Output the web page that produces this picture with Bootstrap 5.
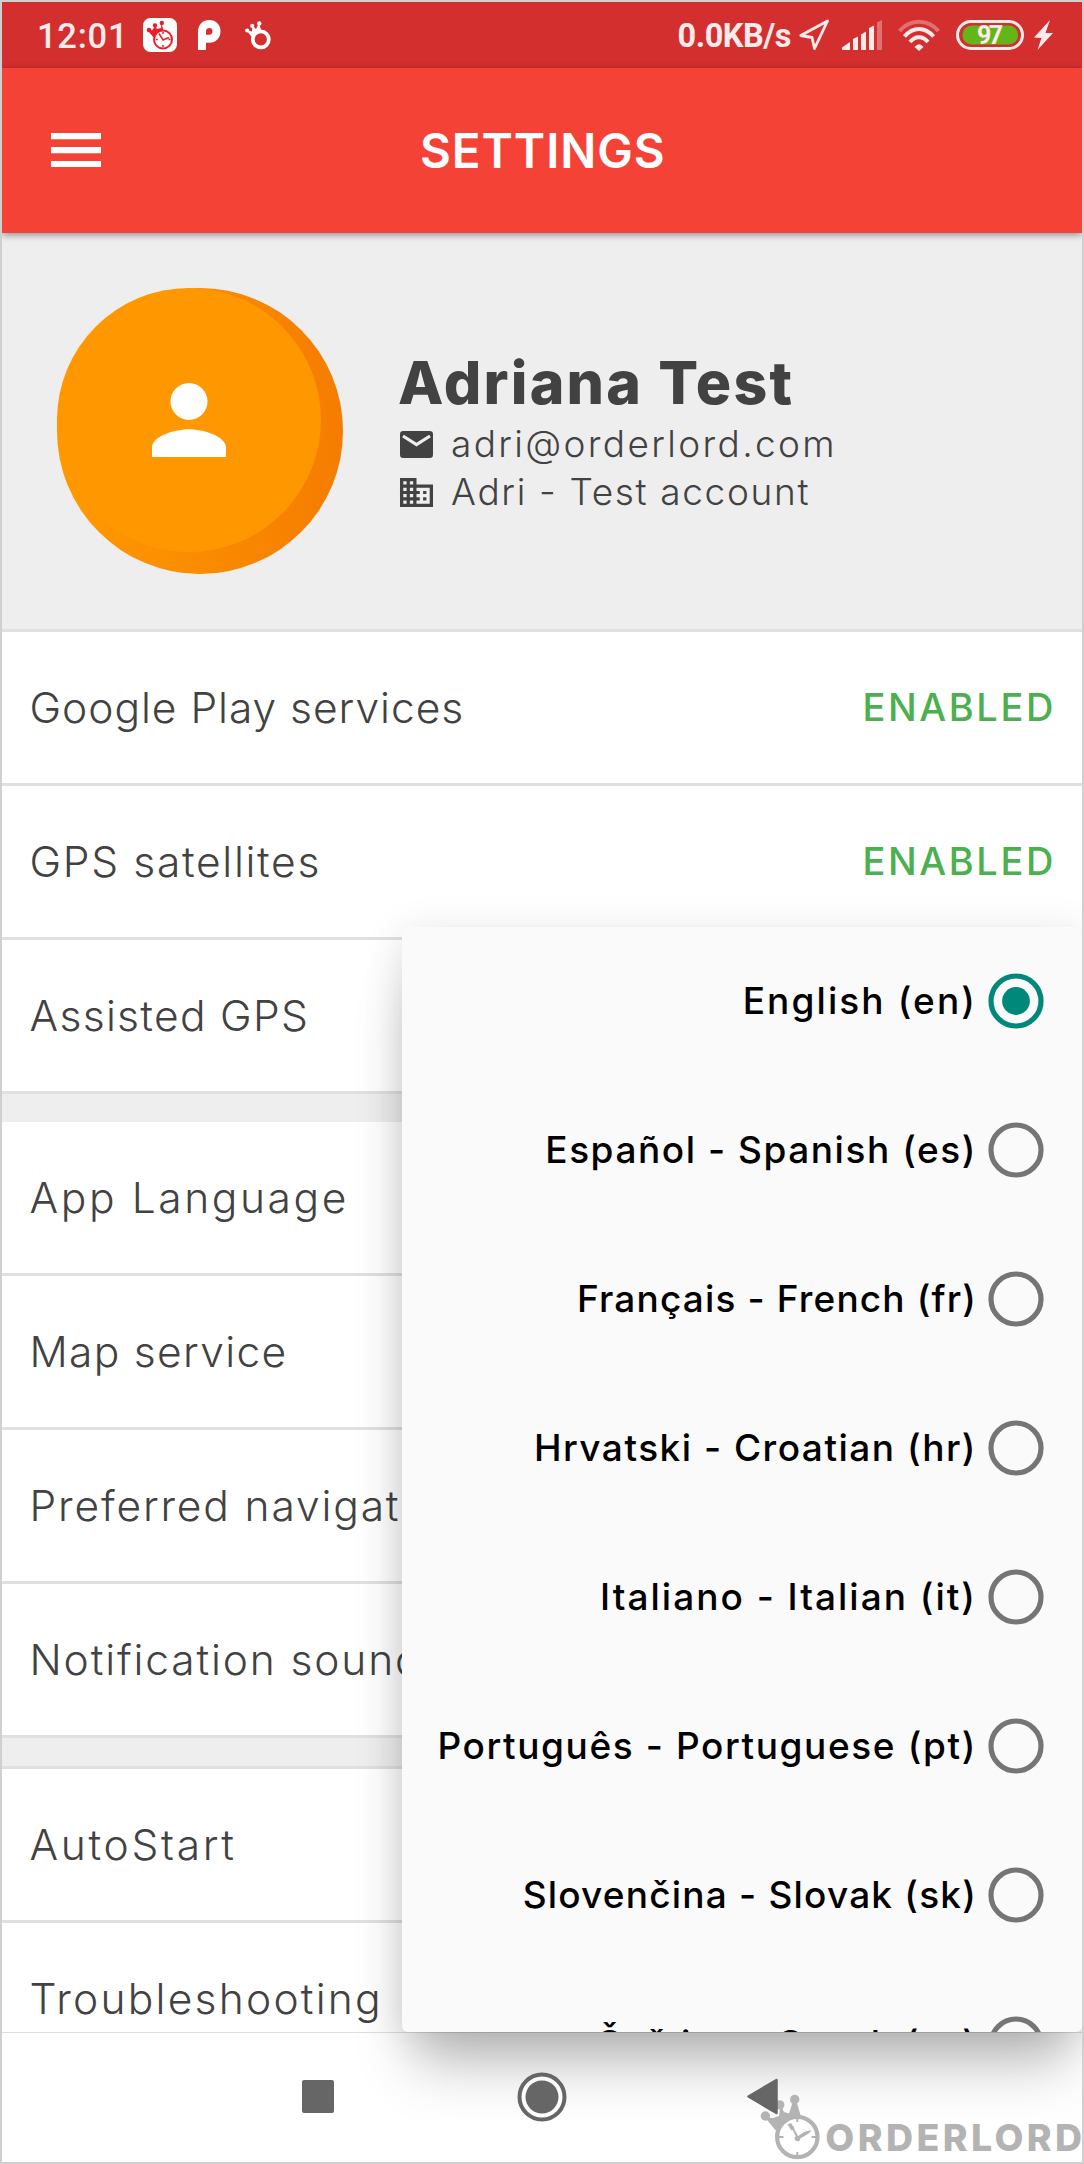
<!DOCTYPE html>
<html lang="en">
<head>
<meta charset="utf-8">
<meta name="viewport" content="width=device-width, initial-scale=1">
<title>Settings</title>
<link href="https://cdn.jsdelivr.net/npm/bootstrap@5.3.0/dist/css/bootstrap.min.css" rel="stylesheet">
<style>
  body { font-family: Inter, "Open Sans", sans-serif; background: #fff; }
  .phone { width: 1084px; height: 2164px; border: 2px solid #d0d0d0; background: #fff; white-space: nowrap; }
  .phone svg { display: block; flex: none; }

  .status { height: 66px; background: #d32f2f; color: #fdeaea; padding: 0 29px 0 35px; font: 500 34.5px/66px Roboto, sans-serif; }
  .status .clock { letter-spacing: .75px; width: 106px; padding-top: 1px; }
  .status .speed { font-weight: 700; font-size: 32.5px; letter-spacing: -.5px; margin-right: 8px; padding-top: 2px; }
  .level { font: 700 25px/1 Roboto, sans-serif; }
  .i-p { margin-left: 21px } .i-ring { margin-left: 24px } .i-signal { margin-left: 12px }
  .i-wifi { margin-left: 15px } .i-battery { margin-left: 16px } .i-bolt { margin-left: 10px }

  .appbar { height: 165px; background: #f44336; color: #fff; padding: 0 0 0 49px; z-index: 1; box-shadow: 0 2px 7px rgba(0,0,0,.4); }
  .appbar h1 { font-size: 47.5px; font-weight: 600; letter-spacing: .95px; line-height: 1; margin: 0 0 0 319px; }

  .profile { height: 399px; background: #eee; border-bottom: 3px solid #e0e0e0; color: #424242; padding: 55px 0 0 55px; }
  .who { margin: 65px 0 0 56px; }
  .who h2 { font-size: 59px; font-weight: 800; letter-spacing: 2.2px; line-height: 60px; margin: 0 0 7px -1px; }
  .who div { height: 48px; font-size: 37px; font-weight: 300; line-height: 48px; }
  .who .mail { letter-spacing: 2.34px; }
  .who .firm { letter-spacing: 1.65px; }
  .who svg { margin-right: 17px; }

  .prefs { height: 1400px; color: #424242; }
  .prefs .pref { height: 154px; border-bottom: 3px solid #e0e0e0; padding: 0 28px 0 27.5px; font-size: 42.5px; font-weight: 300; flex: none; }
  .on { color: #4caf50; font-size: 38px; font-weight: 500; letter-spacing: 2.6px; margin-right: -2px; }
  .gap-strip { height: 28px; background: #eee; flex: none; }
  .gap-strip.edge { height: 31px; border-bottom: 3px solid #e0e0e0; }
  .s10 { letter-spacing: .97px } .s13 { letter-spacing: 1.3px } .s14 { letter-spacing: 1.3px }
  .s17 { letter-spacing: 1.68px } .s19 { letter-spacing: 1.85px } .s23 { letter-spacing: 2.22px }
  .s27 { letter-spacing: 2.6px } .s28 { letter-spacing: 2.7px }

  .softkeys { height: 130px; border-top: 1px solid rgba(0,0,0,.13); z-index: 3; padding-right: 4px; }
  .softkeys svg { margin-top: -2px; }
  .softkeys .home { margin-left: 183px; margin-right: 180px; }

  .veil { top: 860px; left: 298px; right: 0; height: 1258px; overflow: hidden; z-index: 1; }
  .langs { top: 65px; left: 102px; width: 680px; height: 1105px; border-radius: 6px; background: #fafafa; box-shadow: 0 46px 54px -14px rgba(0,0,0,.25), 0 6px 40px rgba(0,0,0,.12); }
  .langlist { height: 1105px; overflow: hidden; border-radius: 6px; }
  .lang { height: 149.1px; color: #000; font-size: 37px; font-weight: 500; padding-right: 38px; flex: none; }
  .lang:first-child { margin-top: -1px; }
  .lang svg { margin-left: 11px; }
  .lang:nth-child(1) { letter-spacing: 2.1px } .lang:nth-child(2) { letter-spacing: 1.55px }
  .lang:nth-child(3) { letter-spacing: 1.15px } .lang:nth-child(4) { letter-spacing: 1.5px }
  .lang:nth-child(5) { letter-spacing: 2px } .lang:nth-child(6) { letter-spacing: 1.6px }
  .lang:nth-child(7) { letter-spacing: 1.2px } .lang:nth-child(8) { letter-spacing: 1px }

  .brandmark { right: 0; bottom: 0; color: #b3b3b3; height: 70px; z-index: 2; }
  .brandmark span { font-size: 37.5px; font-weight: 800; letter-spacing: 3.4px; line-height: 46px; margin: 23px -3.6px 0 5px; }
</style>
</head>
<body>
<svg width="0" height="0" class="position-absolute">
  <defs>
    <g id="off"><circle cx="28" cy="28" r="25" fill="none" stroke="#757575" stroke-width="5.2"/></g>
  </defs>
</svg>

<div class="phone position-relative d-flex flex-column overflow-hidden">
  <header class="status d-flex align-items-center flex-shrink-0">
    <span class="clock">12:01</span>
    <svg width="34" height="34" viewBox="0 0 34 34"><rect width="34" height="34" rx="7.500" fill="#fff"/><g fill="#ee1c25"><path d="M5 13 9.500 12 12 8 14 11 18 10 18.500 5 20.500 13 12 21Z"/><circle cx="6" cy="12" r="2.300"/><circle cx="12" cy="7.500" r="2.200"/><circle cx="18.800" cy="5" r="2.200"/></g><circle cx="20" cy="21.500" r="9" fill="#fff" stroke="#ee1c25" stroke-width="2"/><path d="M16 15.500 20 22 26 19.500M20 14v2M20 27v2M12.800 21.500h2M25.500 21.500h2" fill="none" stroke="#ee1c25" stroke-width="1.500"/></svg>
    <svg class="i-p" width="23" height="30" viewBox="0 0 23 30"><path d="M4 30V11.500C4 7 7 4 11.300 4S18.500 7 18.500 11.300 15.500 18.700 11.300 18.700H8" fill="none" stroke="#fff" stroke-width="8"/></svg>
    <svg class="i-ring" width="26" height="29" viewBox="0 0 26 29"><g fill="#fff"><path d="M1 9 7 10.500 7.500 5 11 8 14 2 16 9 10 16 6 15Z"/><circle cx="2.200" cy="9.500" r="2.100"/><circle cx="7.200" cy="4.800" r="2.100"/><circle cx="14.300" cy="2.400" r="2.200"/></g><circle cx="15.800" cy="18.400" r="8" fill="#d32f2f" stroke="#fff" stroke-width="3.800"/></svg>
    <span class="speed ms-auto">0.0KB/s</span>
    <svg width="31" height="32" viewBox="0 0 31 32"><path d="M1.800 16.500 28.500 2 15.500 29.500 13 18.500Z" fill="none" stroke="#fdeaea" stroke-width="2.800" stroke-linejoin="round"/></svg>
    <svg class="i-signal" width="41" height="30" viewBox="0 0 41 30"><path d="M0 30V27.500L8 22V30ZM11 30V19L16 16.500V30ZM19 30V14.500L24 11.500V30ZM27 30V8L32 5.500V30Z" fill="#fdeaea"/><path d="M35 30V2.500L40 0V30Z" fill="#fff" opacity=".32"/></svg>
    <svg class="i-wifi" width="42" height="32" viewBox="0 0 42 32"><g fill="none" stroke="#fdeaea" stroke-width="4"><path d="M1.500 12C12 -.5 30 -.5 40.500 12" opacity=".35"/><path d="M6.500 17.500C15 7.500 27 7.500 35.500 17.500"/><path d="M12 23C17 16.500 25 16.500 30 23"/></g><path d="M16.500 28Q21 22.500 25.500 28L21 32Z" fill="#fdeaea"/></svg>
    <svg class="i-battery" width="68" height="30" viewBox="0 0 68 30"><rect x="1.500" y="1.500" width="65" height="27" rx="13.500" fill="none" stroke="#fdeaea" stroke-width="3"/><rect x="6.500" y="5.500" width="55.500" height="19" rx="9" fill="#64b51a"/><text x="34" y="24" text-anchor="middle" class="level" fill="#fdeaea" textLength="26">97</text></svg>
    <svg class="i-bolt" width="19" height="30" viewBox="0 0 19 30"><path d="M16 0 0 17.500 7.500 18 3.500 30 19 13H11.500Z" fill="#fdeaea"/></svg>
  </header>

  <nav class="appbar d-flex align-items-center position-relative flex-shrink-0">
    <svg width="50" height="35" viewBox="0 0 50 35"><path d="M0 3.200H50M0 17.100H50M0 31H50" stroke="#fff" stroke-width="6.200"/></svg>
    <h1>SETTINGS</h1>
  </nav>

  <section class="profile d-flex flex-shrink-0">
    <svg width="286" height="286" viewBox="0 0 286 286">
      <defs><linearGradient id="amber"><stop offset=".08" stop-color="#ff9800"/><stop offset="1" stop-color="#f57c00"/></linearGradient></defs>
      <circle cx="143" cy="143" r="143" fill="url(#amber)"/><circle cx="132" cy="132" r="132" fill="#ff9800"/>
      <path transform="translate(76.500 76.500) scale(4.625)" fill="#fff" d="M12 12c2.210 0 4-1.790 4-4s-1.790-4-4-4-4 1.790-4 4 1.790 4 4 4zm0 2c-2.670 0-8 1.340-8 4v2h16v-2c0-2.660-5.330-4-8-4z"/>
    </svg>
    <div class="who">
      <h2>Adriana Test</h2>
      <div class="mail d-flex align-items-center"><svg width="35" height="27" viewBox="0 0 35 27"><rect x="1" width="33" height="27" rx="3.300" fill="#424242"/><path d="M4 5 17.500 13.500 31 5" fill="none" stroke="#eee" stroke-width="3.200"/></svg>adri@orderlord.com</div>
      <div class="firm d-flex align-items-center"><svg width="35" height="29" viewBox="1.400 3 21.200 18" preserveAspectRatio="none"><path fill="#424242" d="M12 7V3H2v18h20V7H12zM6 19H4v-2h2v2zm0-4H4v-2h2v2zm0-4H4V9h2v2zm0-4H4V5h2v2zm4 12H8v-2h2v2zm0-4H8v-2h2v2zm0-4H8V9h2v2zm0-4H8V5h2v2zm10 12h-8v-2h2v-2h-2v-2h2v-2h-2V9h8v10zm-2-8h-2v2h2v-2zm0 4h-2v2h2v-2z"/></svg>Adri - Test account</div>
    </div>
  </section>

  <main class="prefs d-flex flex-column overflow-hidden flex-shrink-0">
    <div class="pref d-flex align-items-center justify-content-between"><span class="s10">Google Play services</span><span class="on">ENABLED</span></div>
    <div class="pref d-flex align-items-center justify-content-between"><span class="s17">GPS satellites</span><span class="on">ENABLED</span></div>
    <div class="pref d-flex align-items-center"><span class="s13">Assisted GPS</span></div>
    <div class="gap-strip"></div>
    <div class="pref d-flex align-items-center"><span class="s27">App Language</span></div>
    <div class="pref d-flex align-items-center"><span class="s14">Map service</span></div>
    <div class="pref d-flex align-items-center"><span class="s19">Preferred navigation</span></div>
    <div class="pref d-flex align-items-center"><span class="s19">Notification sound</span></div>
    <div class="gap-strip edge"></div>
    <div class="pref d-flex align-items-center"><span class="s28">AutoStart</span></div>
    <div class="pref d-flex align-items-center"><span class="s23">Troubleshooting</span></div>
  </main>

  <footer class="softkeys position-relative flex-shrink-0 d-flex justify-content-center align-items-center">
    <svg width="32" height="33" viewBox="0 0 32 33"><rect width="32" height="33" rx="2" fill="#666"/></svg>
    <svg class="home" width="50" height="50" viewBox="0 0 50 50"><circle cx="25" cy="25" r="22.500" fill="#fff" fill-opacity=".7" stroke="#666" stroke-width="4"/><circle cx="25" cy="25" r="16.500" fill="#666"/></svg>
    <svg width="31" height="37" viewBox="0 0 31 37"><path d="M1.500 18.500 29.500 2V35Z" fill="#666" stroke="#666" stroke-width="2.500" stroke-linejoin="round"/></svg>
  </footer>

  <div class="veil position-absolute pe-none">
    <div class="langs position-absolute">
      <div class="langlist d-flex flex-column">
        <div class="lang d-flex align-items-center justify-content-end">English (en)<svg width="56" height="56" viewBox="0 0 56 56"><circle cx="28" cy="28" r="25" fill="none" stroke="#00897b" stroke-width="5.200"/><circle cx="28" cy="28" r="13.900" fill="#00897b"/></svg></div>
        <div class="lang d-flex align-items-center justify-content-end">Español - Spanish (es)<svg width="56" height="56"><use href="#off"/></svg></div>
        <div class="lang d-flex align-items-center justify-content-end">Français - French (fr)<svg width="56" height="56"><use href="#off"/></svg></div>
        <div class="lang d-flex align-items-center justify-content-end">Hrvatski - Croatian (hr)<svg width="56" height="56"><use href="#off"/></svg></div>
        <div class="lang d-flex align-items-center justify-content-end">Italiano - Italian (it)<svg width="56" height="56"><use href="#off"/></svg></div>
        <div class="lang d-flex align-items-center justify-content-end">Português - Portuguese (pt)<svg width="56" height="56"><use href="#off"/></svg></div>
        <div class="lang d-flex align-items-center justify-content-end">Slovenčina - Slovak (sk)<svg width="56" height="56"><use href="#off"/></svg></div>
        <div class="lang d-flex align-items-center justify-content-end">Čeština - Czech (cs)<svg width="56" height="56"><use href="#off"/></svg></div>
      </div>
    </div>
  </div>

  <div class="brandmark position-absolute d-flex">
    <svg width="60" height="70" viewBox="0 0 60 70"><g fill="#b3b3b3"><path d="M5 25.500 13 26 19 24 20.500 13 24 20 29 21.500 33.500 8H36L42 28 22 46Z"/><circle cx="5.400" cy="24" r="4.700"/><circle cx="19.700" cy="12.900" r="4.700"/><circle cx="34.700" cy="7.500" r="4.700"/></g><circle cx="37.300" cy="45" r="20.200" fill="#fff" stroke="#b3b3b3" stroke-width="4.200"/><path d="M37.300 26v4M37.300 60v4M19 45h4.500M51.500 45H56M38 46 32 35" stroke="#b3b3b3" stroke-width="2"/><path d="M27.500 32.500 31 31 34.500 36 31.500 38.500Z" fill="#b3b3b3"/><path d="M37 46Q43 38 52 38.500 48 42.500 39 47Z" fill="#b3b3b3"/><circle cx="37.500" cy="46.500" r="2.800" fill="#b3b3b3"/></svg>
    <span>ORDERLORD</span>
  </div>
</div>
<script src="https://cdn.jsdelivr.net/npm/bootstrap@5.3.0/dist/js/bootstrap.bundle.min.js"></script>
</body>
</html>
